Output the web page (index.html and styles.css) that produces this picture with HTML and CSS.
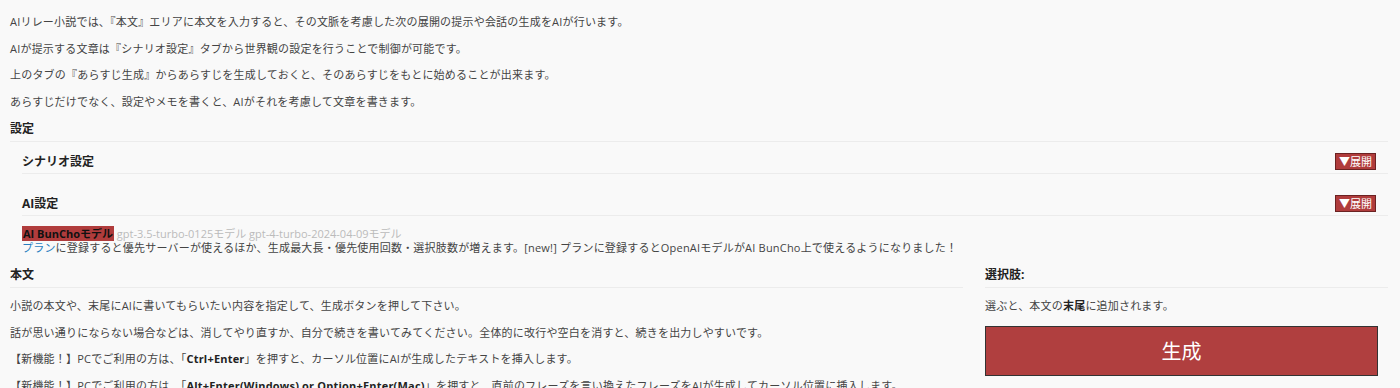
FILE: index.html
```html
<!DOCTYPE html>
<html lang="ja">
<head>
  <meta charset="UTF-8">
  <meta name="viewport" content="width=device-width, initial-scale=1.0">
  <title>AIリレー小説</title>
  <link rel="stylesheet" href="styles.css">
</head>
<body>
  <div class="page">
    <div class="intro">
      <p>AIリレー小説では、『本文』エリアに本文を入力すると、その文脈を考慮した次の展開の提示や会話の生成をAIが行います。</p>
      <p>AIが提示する文章は『シナリオ設定』タブから世界観の設定を行うことで制御が可能です。</p>
      <p>上のタブの『あらすじ生成』からあらすじを生成しておくと、そのあらすじをもとに始めることが出来ます。</p>
      <p>あらすじだけでなく、設定やメモを書くと、AIがそれを考慮して文章を書きます。</p>
    </div>

    <h4 class="section-title top-title">設定</h4>

    <div class="setting first">
      <div class="setting-head">
        <span class="setting-name">シナリオ設定</span>
        <button class="toggle-btn">▼展開</button>
      </div>
    </div>

    <div class="setting">
      <div class="setting-head">
        <span class="setting-name">AI設定</span>
        <button class="toggle-btn">▼展開</button>
      </div>
      <div class="model-list">
        <span class="model active">AI BunChoモデル</span>
        <span class="model">gpt-3.5-turbo-0125モデル</span>
        <span class="model">gpt-4-turbo-2024-04-09モデル</span>
      </div>
      <div class="plan-note"><a href="#" class="plan-link">プラン</a>に登録すると優先サーバーが使えるほか、生成最大長・優先使用回数・選択肢数が増えます。[new!] プランに登録するとOpenAIモデルがAI BunCho上で使えるようになりました！</div>
    </div>

    <div class="main-row">
      <div class="main-col">
        <h4 class="section-title">本文</h4>
        <p>小説の本文や、末尾にAIに書いてもらいたい内容を指定して、生成ボタンを押して下さい。</p>
        <p>話が思い通りにならない場合などは、消してやり直すか、自分で続きを書いてみてください。全体的に改行や空白を消すと、続きを出力しやすいです。</p>
        <p>【新機能！】PCでご利用の方は、「<b>Ctrl+Enter</b>」を押すと、カーソル位置にAIが生成したテキストを挿入します。</p>
        <p>【新機能！】PCでご利用の方は、「<b>Alt+Enter(Windows) or Option+Enter(Mac)</b>」を押すと、直前のフレーズを言い換えたフレーズをAIが生成してカーソル位置に挿入します。</p>
      </div>
      <div class="side-col">
        <h4 class="section-title">選択肢:</h4>
        <p>選ぶと、本文の<b>末尾</b>に追加されます。</p>
        <button class="generate-btn">生成</button>
      </div>
    </div>
  </div>
</body>
</html>
```

FILE: styles.css
```css
body {
  margin: 0;
  background-color: #f9f9f9;
  color: #444;
  font-family: "Open Sans", "Noto Sans CJK JP", sans-serif;
  font-size: 11px;
  overflow: hidden;
}
.page {
  padding: 3px 12px 0 10px;
}
p {
  margin: 12px 0;
  line-height: 14.5px;
  letter-spacing: 0.2px;
}
b {
  color: #222;
}
.section-title {
  margin: 0;
  padding-bottom: 5px;
  border-bottom: 1px solid #ececec;
  font-size: 12px;
  line-height: 14px;
  color: #222;
}
.top-title {
  padding-top: 1px;
}
/* 設定の各項目 */
.setting {
  margin-left: 12px;
  margin-top: 10px;
}
.setting.first {
  margin-top: 0;
}
.setting-head {
  display: flex;
  justify-content: space-between;
  align-items: center;
  padding: 11px 0 3px;
  border-bottom: 1px solid #ececec;
}
.setting-name {
  font-size: 12px;
  font-weight: bold;
  line-height: 14px;
  color: #222;
}
.toggle-btn {
  margin-right: 12px;
  padding: 0 3px;
  height: 17px;
  border: 1px solid #6b2222;
  background-color: #b03c3c;
  color: white;
  font-family: inherit;
  font-size: 11px;
  line-height: 15px;
}
.model-list {
  margin-top: 11px;
  line-height: 14px;
}
.model {
  color: #bbb;
}
.model.active {
  background-color: #b03c3c;
  color: #111;
  font-weight: bold;
  padding: 0 1px;
}
.plan-note {
  line-height: 14px;
  letter-spacing: 0.2px;
}
.plan-link {
  color: #2a7fc0;
  text-decoration: none;
}
.main-row {
  display: flex;
  gap: 22px;
  margin-top: 13px;
}
.main-col {
  flex: 1;
}
.side-col {
  width: 403px;
}
.section-title + p {
  margin-top: 11px;
}
.generate-btn {
  display: block;
  width: 393px;
  height: 50px;
  margin-top: 12px;
  border: 1px solid #333;
  background-color: #b03f3f;
  color: white;
  font-family: inherit;
  font-size: 20px;
}
```
